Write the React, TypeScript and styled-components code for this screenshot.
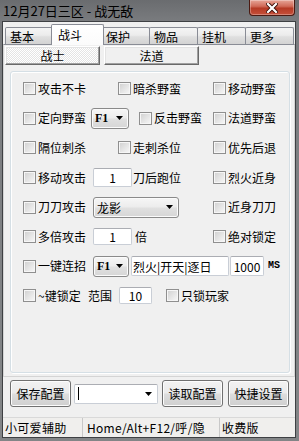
import React from "react";
import styled, { createGlobalStyle, css } from "styled-components";

const UI = `"Noto Sans CJK SC", "Noto Sans", sans-serif`;

const GlobalStyle = createGlobalStyle`
  html, body { margin: 0; padding: 0; }
  body {
    width: 299px; height: 441px; overflow: hidden; background: #7a7c7e;
    font-family: ${UI}; font-size: 12px; color: #000;
  }
  * { box-sizing: border-box; }
`;

const Window = styled.div`
  width: 299px;
  height: 441px;
  display: flex;
  flex-direction: column;
  background: linear-gradient(180deg, #6a6c6f 0px, #7a7c7f 22px, #838587 100%);
`;

const TitleBar = styled.div`
  height: 21px;
  flex: none;
  display: flex;
  align-items: flex-start;
  justify-content: space-between;
  padding-left: 3px;
`;

const TitleText = styled.div`
  font-family: ${UI};
  font-size: 13px;
  line-height: 21px;
  color: #000000;
`;

const CloseBtn = styled.div`
  width: 46px;
  height: 16px;
  margin-right: 4px;
  border: 1px solid #4b1a12;
  border-top: none;
  border-radius: 0 0 4px 4px;
  background: linear-gradient(180deg, #e6a597 0%, #d06a58 42%, #b53a25 55%, #c5503a 100%);
  box-shadow: inset 0 0 0 1px rgba(255, 255, 255, 0.3);
  display: flex;
  align-items: center;
  justify-content: center;
`;

const Client = styled.div`
  flex: 1;
  min-height: 0;
  margin: 0 3px 3px 2px;
  border: 1px solid #3e4043;
  background: #f0f0f0;
  display: flex;
  flex-direction: column;
`;

const TabStrip = styled.div`
  height: 22px;
  flex: none;
  display: flex;
  align-items: flex-end;
  padding-left: 2px;
  position: relative;
  z-index: 1;
`;

const Tab = styled.div<{ $active?: boolean }>`
  flex: none;
  width: 49px;
  height: 17px;
  margin-left: -1px;
  &:first-child { margin-left: 0; }
  border: 1px solid #898c95;
  border-bottom: none;
  border-radius: 2px 2px 0 0;
  background: linear-gradient(180deg, #f4f4f4 0%, #ececec 45%, #dfdfdf 55%, #d3d3d3 100%);
  padding: 2px 0 0 4px;
  font-size: 12px;
  line-height: 14px;
  ${(p) =>
    p.$active &&
    css`
      width: 53px;
      height: 21px;
      margin-left: -3px;
      margin-right: -2px;
      margin-bottom: -1px;
      background: linear-gradient(180deg, #ffffff 0%, #fbfbfb 100%);
      position: relative;
      z-index: 2;
      padding: 0 0 0 6px;
      line-height: 19px;
    `}
`;

const TabPage = styled.div`
  height: 333px;
  flex: none;
  border: 1px solid #d4d4d4;
  border-top-color: #898c95;
  background: #f0f0f0;
  display: flex;
  flex-direction: column;
`;

const SubTabs = styled.div`
  display: flex;
  gap: 4px;
  height: 19px;
  margin: 1px 0 0 1px;
  flex: none;
`;

const SubTab = styled.div<{ $active?: boolean }>`
  width: 95px;
  height: 19px;
  border: 1px solid;
  border-color: #ffffff #696969 #696969 #ffffff;
  box-shadow: inset -1px -1px 0 #a0a0a0, inset 1px 1px 0 #e3e3e3;
  background: #f0f0f0;
  text-align: center;
  font-size: 12px;
  line-height: 17px;
  ${(p) =>
    p.$active &&
    css`
      background: repeating-conic-gradient(#ffffff 0 25%, #e4e4e4 0 50%) 0 0 / 2px 2px;
    `}
`;

const Group = styled.div`
  margin: 6px 0 0 6px;
  width: 280px;
  height: 302px;
  flex: none;
  border: 1px solid #d5dfe5;
  border-radius: 3px;
  box-shadow: inset 1px 1px 0 #ffffff, 1px 1px 0 #ffffff;
  padding: 2px 0 0 12px;
  display: flex;
  flex-direction: column;
`;

const Row = styled.div`
  height: 29.6px;
  flex: none;
  display: flex;
  align-items: center;
`;

const CheckWrap = styled.label<{ $w?: number; $ml?: number }>`
  flex: none;
  display: flex;
  align-items: center;
  width: ${(p) => (p.$w ? `${p.$w}px` : "auto")};
  margin-left: ${(p) => p.$ml ?? 0}px;
  font-size: 12px;
  line-height: 14px;
  white-space: nowrap;
`;

const Box = styled.span`
  flex: none;
  width: 13px;
  height: 13px;
  border: 1px solid #8f8f8f;
  background: linear-gradient(135deg, #cfcfcf 0%, #e6e6e6 55%, #f8f8f8 100%);
  box-shadow: inset 0 0 0 1px #f6f6f6;
  margin-right: 2px;
`;

const Plain = styled.span<{ $ml?: number; $w?: number }>`
  flex: none;
  margin-left: ${(p) => p.$ml ?? 0}px;
  width: ${(p) => (p.$w ? `${p.$w}px` : "auto")};
  font-size: 12px;
  line-height: 14px;
  white-space: nowrap;
`;

const MsText = styled.span<{ $ml?: number }>`
  flex: none;
  margin-left: ${(p) => p.$ml ?? 0}px;
  font-family: "Liberation Mono", "DejaVu Sans Mono", monospace;
  font-weight: bold;
  font-size: 10px;
  line-height: 12px;
`;

const Edit = styled.div<{ $w: number; $h?: number; $ml?: number; $left?: boolean }>`
  flex: none;
  width: ${(p) => p.$w}px;
  height: ${(p) => p.$h ?? 19}px;
  margin-left: ${(p) => p.$ml ?? 0}px;
  background: #ffffff;
  border: 1px solid #c9ced6;
  border-top-color: #abadb3;
  border-radius: 2px;
  display: flex;
  align-items: center;
  justify-content: ${(p) => (p.$left ? "flex-start" : "center")};
  padding: 0 ${(p) => (p.$left ? "1px" : "0")};
  font-size: 12px;
  white-space: nowrap;
  overflow: hidden;
`;

const Drop = styled.div<{ $w: number; $ml?: number }>`
  flex: none;
  width: ${(p) => p.$w}px;
  height: 21px;
  margin-left: ${(p) => p.$ml ?? 0}px;
  border: 1px solid #8a8a8a;
  border-radius: 3px;
  background: linear-gradient(180deg, #f6f6f6 0%, #ececec 48%, #e0e0e0 52%, #d6d6d6 100%);
  box-shadow: inset 0 0 0 1px #fbfbfb;
  display: flex;
  align-items: center;
  justify-content: space-between;
  padding: 0 5px 0 3px;
  font-size: 12px;
  white-space: nowrap;
`;

const KeyText = styled.span`
  font-family: "Liberation Serif", "DejaVu Serif", serif;
  font-weight: bold;
  font-size: 12px;
`;

const Combo = styled.div`
  flex: none;
  width: 84px;
  height: 20px;
  margin-left: 3px;
  background: #ffffff;
  border: 1px solid #c9ced6;
  border-top-color: #abadb3;
  border-radius: 2px;
  display: flex;
  align-items: center;
  justify-content: space-between;
  padding: 0 5px 0 3px;
`;

const Caret = styled.span`
  width: 1px;
  height: 13px;
  background: #000;
`;

const ButtonRow = styled.div`
  height: 27px;
  margin-top: 3px;
  flex: none;
  display: flex;
  align-items: center;
  padding-left: 7px;
`;

const Button = styled.div<{ $ml?: number }>`
  flex: none;
  width: 61px;
  height: 27px;
  margin-left: ${(p) => p.$ml ?? 0}px;
  border: 1px solid #707070;
  border-radius: 3px;
  background: linear-gradient(180deg, #f2f2f2 0%, #ebebeb 48%, #dddddd 52%, #cfcfcf 100%);
  box-shadow: inset 0 0 0 1px #fcfcfc;
  display: flex;
  align-items: center;
  justify-content: center;
  font-size: 12px;
`;

const Spacer = styled.div`
  flex: 1;
`;

const StatusBar = styled.div`
  height: 20px;
  flex: none;
  display: flex;
  align-items: center;
  border-top: 1px solid #d9d9d9;
  background: #f0efed;
`;

const StatusCell = styled.div<{ $w?: number; $pl: number; $last?: boolean }>`
  flex: ${(p) => (p.$last ? "1" : "none")};
  width: ${(p) => (p.$w ? `${p.$w}px` : "auto")};
  height: 19px;
  padding-left: ${(p) => p.$pl}px;
  border-right: ${(p) => (p.$last ? "none" : "1px solid #c8c8c8")};
  font-size: 12px;
  line-height: 19px;
  letter-spacing: 0.3px;
  white-space: nowrap;
`;

const Arrow = () => (
  <svg width="7" height="4" viewBox="0 0 7 4">
    <polygon points="0,0 7,0 3.5,4" fill="#000" />
  </svg>
);

const CloseX = () => (
  <svg width="12" height="10" viewBox="0 0 12 10">
    <path d="M2 1 L10 9 M10 1 L2 9" stroke="#3a0d06" strokeWidth="4" strokeLinecap="square" />
    <path d="M2 1 L10 9 M10 1 L2 9" stroke="#ffffff" strokeWidth="2.2" strokeLinecap="square" />
  </svg>
);

const Check: React.FC<{ label: string; w?: number; ml?: number }> = ({ label, w, ml }) => (
  <CheckWrap $w={w} $ml={ml}>
    <Box />
    <span>{label}</span>
  </CheckWrap>
);

const tabs = ["基本", "战斗", "保护", "物品", "挂机", "更多"];

export default function App() {
  return (
    <>
      <GlobalStyle />
      <Window>
        <TitleBar>
          <TitleText>12月27日三区 - 战无敌</TitleText>
          <CloseBtn>
            <CloseX />
          </CloseBtn>
        </TitleBar>
        <Client>
          <TabStrip>
            {tabs.map((t) => (
              <Tab key={t} $active={t === "战斗"}>
                {t}
              </Tab>
            ))}
          </TabStrip>
          <TabPage>
            <SubTabs>
              <SubTab $active>战士</SubTab>
              <SubTab>法道</SubTab>
            </SubTabs>
            <Group>
              <Row>
                <Check label="攻击不卡" w={95} />
                <Check label="暗杀野蛮" w={95} />
                <Check label="移动野蛮" />
              </Row>
              <Row>
                <Check label="定向野蛮" w={68} />
                <Drop $w={38}>
                  <KeyText>F1</KeyText>
                  <Arrow />
                </Drop>
                <Check label="反击野蛮" w={74} ml={10} />
                <Check label="法道野蛮" />
              </Row>
              <Row>
                <Check label="隔位刺杀" w={95} />
                <Check label="走刺杀位" w={95} />
                <Check label="优先后退" />
              </Row>
              <Row>
                <Check label="移动攻击" w={70} />
                <Edit $w={39} $h={19}>1</Edit>
                <Plain $ml={1} $w={48}>刀后跑位</Plain>
                <Check label="烈火近身" ml={32} />
              </Row>
              <Row>
                <Check label="刀刀攻击" w={70} />
                <Drop $w={86}>
                  <span>龙影</span>
                  <Arrow />
                </Drop>
                <Check label="近身刀刀" ml={34} />
              </Row>
              <Row>
                <Check label="多倍攻击" w={70} />
                <Edit $w={39} $h={17}>1</Edit>
                <Plain $ml={3} $w={12}>倍</Plain>
                <Check label="绝对锁定" ml={66} />
              </Row>
              <Row>
                <Check label="一键连招" w={70} />
                <Drop $w={36}>
                  <KeyText>F1</KeyText>
                  <Arrow />
                </Drop>
                <Edit $w={98} $h={20} $ml={2} $left>
                  烈火|开天|逐日
                </Edit>
                <Edit $w={34} $h={20} $ml={1}>1000</Edit>
                <MsText $ml={4}>MS</MsText>
              </Row>
              <Row>
                <Check label="~键锁定" w={65} />
                <Plain $w={24}>范围</Plain>
                <Edit $w={33} $h={17} $ml={7}>10</Edit>
                <Check label="只锁玩家" ml={14} />
              </Row>
            </Group>
          </TabPage>
          <ButtonRow>
            <Button>保存配置</Button>
            <Combo>
              <Caret />
              <Arrow />
            </Combo>
            <Button $ml={4}>读取配置</Button>
            <Button $ml={5}>快捷设置</Button>
          </ButtonRow>
          <Spacer />
          <StatusBar>
            <StatusCell $w={80} $pl={2}>小可爱辅助</StatusCell>
            <StatusCell $w={137} $pl={4}>Home/Alt+F12/呼/隐</StatusCell>
            <StatusCell $pl={2} $last>收费版</StatusCell>
          </StatusBar>
        </Client>
      </Window>
    </>
  );
}
